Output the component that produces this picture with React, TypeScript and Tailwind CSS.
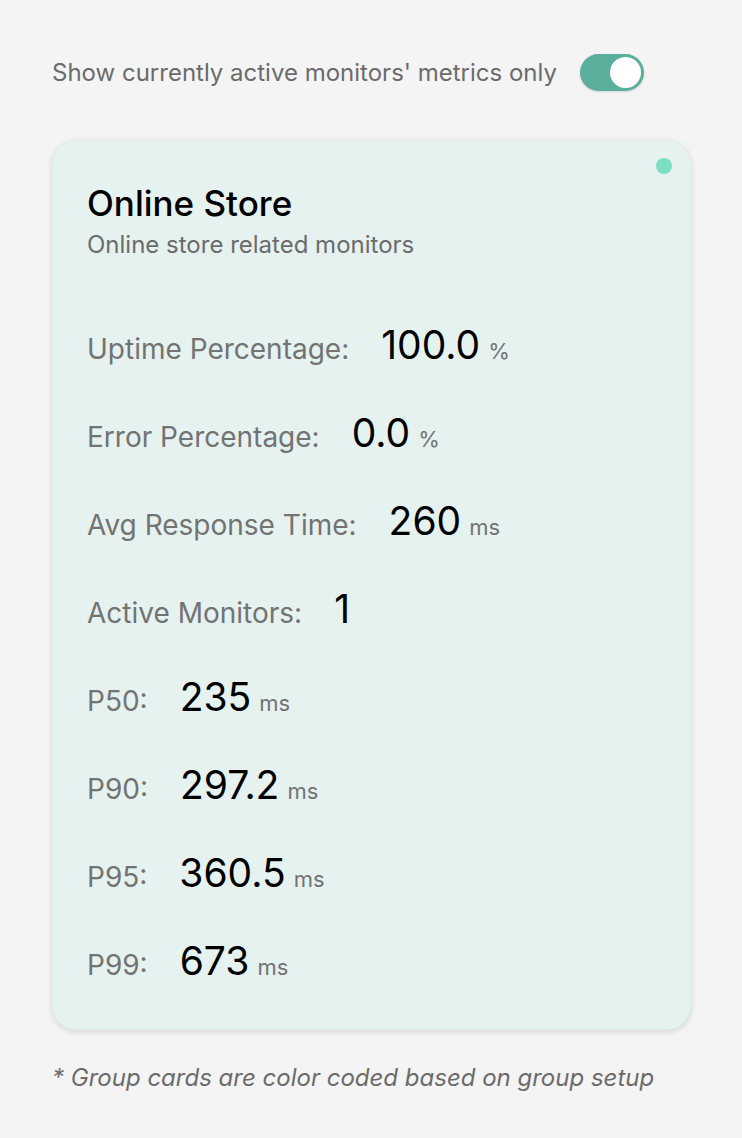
import React from 'react';

const metrics = [
    { label: 'Uptime Percentage:', value: '100.0', unit: '%' },
    { label: 'Error Percentage:', value: '0.0', unit: '%' },
    { label: 'Avg Response Time:', value: '260', unit: 'ms' },
    { label: 'Active Monitors:', value: '1', unit: '' },
    { label: 'P50:', value: '235', unit: 'ms' },
    { label: 'P90:', value: '297.2', unit: 'ms' },
    { label: 'P95:', value: '360.5', unit: 'ms' },
    { label: 'P99:', value: '673', unit: 'ms' },
];

export default function App() {
    return (
        <div className="min-h-screen bg-[#f4f4f4] px-[52px] pt-[54px] font-['Inter',sans-serif]">
            {/* Toggle */}
            <div className="flex items-center gap-[23px]">
                <span className="text-[24px] text-[#6b6b6b]">Show currently active monitors' metrics only</span>
                <div className="flex h-[37px] w-[64px] items-center justify-end rounded-full bg-[#5aaf9c] px-[3px] shadow-sm">
                    <div className="h-[31px] w-[31px] rounded-full bg-white" />
                </div>
            </div>

            {/* Card */}
            <div className="relative mt-[49px] w-[639px] rounded-[24px] border border-[#dcefe9] bg-[#e6f2ef] px-[34px] pb-[46px] pt-[41px] shadow-[0_2px_6px_rgba(0,0,0,0.12)]">
                <div className="absolute right-[18px] top-[17px] h-[16px] w-[16px] rounded-full bg-[#7ddfc3]" />
                <h2 className="text-[35px] leading-[42px] font-medium text-black">Online Store</h2>
                <p className="mt-[6px] text-[24px] leading-[30px] text-[#6b6b6b]">Online store related monitors</p>

                <div className="mt-[63px] flex flex-col gap-[44px]">
                    {metrics.map((m) => (
                        <div key={m.label} className="flex h-[44px] items-baseline">
                            <span className="text-[28px] text-[#737373]">{m.label}</span>
                            <span className="ml-[32px] text-[39px] leading-[44px] text-black">{m.value}</span>
                            {m.unit && <span className="ml-[8px] text-[22px] text-[#737373]">{m.unit}</span>}
                        </div>
                    ))}
                </div>
            </div>

            <p className="mt-[30px] text-[24px] italic text-[#6b6b6b]">* Group cards are color coded based on group setup</p>
        </div>
    );
}
